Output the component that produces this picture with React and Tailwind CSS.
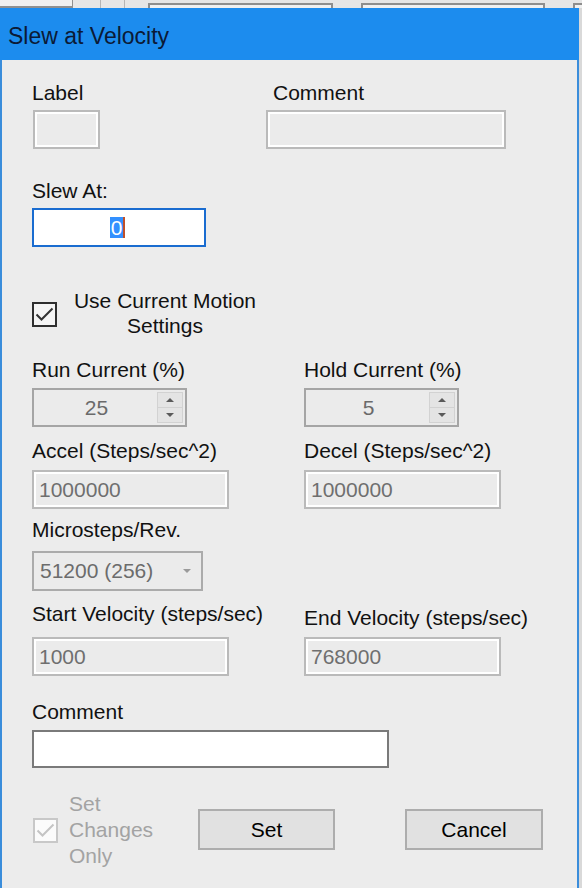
import React from "react";

const font = { fontFamily: '"Liberation Sans", Arial, sans-serif' };

function Label({ children, className = "" }) {
  return <div className={`text-[21px] leading-[24px] text-[#111] whitespace-nowrap ${className}`}>{children}</div>;
}

function GrayBox({ value, className = "" }) {
  return (
    <div
      className={`h-[39px] border-2 border-[#bababa] bg-[#ebebeb] shadow-[inset_0_0_0_2px_#ffffff] flex items-center pl-[5px] text-[21px] text-[#6f6f6f] ${className}`}
    >
      {value}
    </div>
  );
}

function Spinner({ value }) {
  return (
    <div className="w-[155px] h-[39px] border-2 border-[#a5a5a5] bg-[#ebebeb] flex items-stretch">
      <div className="flex-1 flex items-center justify-center text-[21px] text-[#6a6a6a] pl-[2px]">{value}</div>
      <div className="w-[26px] my-[2px] mr-[2px] flex flex-col">
        <div className="flex-1 bg-[#e4e4e4] border border-[#d2d2d2] flex items-center justify-center">
          <div className="w-0 h-0 border-x-[4px] border-x-transparent border-b-[4px] border-b-[#5a5a5a]" />
        </div>
        <div className="flex-1 bg-[#e4e4e4] border border-[#d2d2d2] border-t-0 flex items-center justify-center">
          <div className="w-0 h-0 border-x-[4px] border-x-transparent border-t-[4px] border-t-[#5a5a5a]" />
        </div>
      </div>
    </div>
  );
}

function Check({ disabled }) {
  const c = disabled ? "#c4c4c4" : "#333333";
  return (
    <div
      className={`w-[25px] h-[25px] border-2 flex items-center justify-center ${
        disabled ? "border-[#c8c8c8] bg-[#fbfbfb]" : "border-[#2f2f2f] bg-[#f5f5f5]"
      }`}
    >
      <svg width="21" height="21" viewBox="0 0 21 21">
        <polyline points="2.5,10.5 7.5,15.5 18.5,4.5" fill="none" stroke={c} strokeWidth="2" />
      </svg>
    </div>
  );
}

export default function App() {
  return (
    <div className="w-[582px] h-[888px] bg-[#d9d9d9] flex flex-col overflow-hidden" style={font}>
      {/* window behind the dialog */}
      <div className="h-[8px] shrink-0 flex bg-[#e6e6e6]">
        <div className="w-[73px] border-b-2 border-r border-[#909090] bg-[#f0f0f0]" />
        <div className="w-[28px] border-r border-[#b5b5b5]" />
        <div className="w-[24px] border-r border-[#b5b5b5]" />
        <div className="w-[23px]" />
        <div className="w-[185px] mt-[3px] border-t-2 border-x-2 border-[#8e8e8e] bg-[#f0f0f0]" />
        <div className="w-[28px]" />
        <div className="w-[184px] mt-[3px] border-t-2 border-x-2 border-[#8e8e8e] bg-[#f0f0f0]" />
        <div className="w-[28px]" />
        <div className="flex-1 mt-[3px] border-t-2 border-l-2 border-[#8e8e8e] bg-[#f0f0f0]" />
      </div>

      <div className="w-[579px] flex-1 flex flex-col">
        <div className="h-[52px] shrink-0 bg-[#1c8cee] pl-[8px] pt-[15px]">
          <div className="text-[23px] leading-[26px] text-[#0b1a36]">Slew at Velocity</div>
        </div>

        <div className="flex-1 bg-[#ececec] border-x-2 border-[#3a8ddb] pl-[30px]">
          {/* Label / Comment */}
          <div className="flex mt-[21px]">
            <div className="w-[234px]">
              <Label>Label</Label>
              <GrayBox className="mt-[5px] w-[67px] ml-[1px]" />
            </div>
            <div>
              <Label className="pl-[7px]">Comment</Label>
              <GrayBox className="mt-[5px] w-[240px]" />
            </div>
          </div>

          {/* Slew At */}
          <div className="mt-[30px]">
            <Label>Slew At:</Label>
            <div className="mt-[5px] w-[174px] h-[39px] border-2 border-[#1a6cd0] bg-white flex items-center justify-center">
              <span className="inline-block bg-[#3390ff] text-white text-[21px] leading-[21px] px-[1px] mr-[3px] border-r-2 border-[#c0502a]">
                0
              </span>
            </div>
          </div>

          {/* Use current motion settings */}
          <div className="mt-[41px] flex items-start">
            <div className="mt-[14px]">
              <Check />
            </div>
            <div className="ml-[16px] w-[184px] text-center text-[21px] leading-[25px] text-[#111] whitespace-nowrap">
              Use Current Motion
              <br />
              Settings
            </div>
          </div>

          {/* Run / Hold current */}
          <div className="mt-[20px] flex">
            <div className="w-[272px]">
              <Label>Run Current (%)</Label>
              <div className="mt-[6px]">
                <Spinner value="25" />
              </div>
            </div>
            <div>
              <Label>Hold Current (%)</Label>
              <div className="mt-[6px]">
                <Spinner value="5" />
              </div>
            </div>
          </div>

          {/* Accel / Decel */}
          <div className="mt-[12px] flex">
            <div className="w-[272px]">
              <Label>Accel (Steps/sec^2)</Label>
              <GrayBox value="1000000" className="mt-[7px] w-[197px]" />
            </div>
            <div>
              <Label>Decel (Steps/sec^2)</Label>
              <GrayBox value="1000000" className="mt-[7px] w-[197px]" />
            </div>
          </div>

          {/* Microsteps */}
          <div className="mt-[9px]">
            <Label>Microsteps/Rev.</Label>
            <div className="mt-[9px] w-[171px] h-[40px] border-2 border-[#ababab] bg-[#ebebeb] flex items-center pl-[6px] pr-[10px]">
              <span className="flex-1 text-[21px] text-[#6c6c6c]">51200 (256)</span>
              <div className="w-0 h-0 border-x-[4px] border-x-transparent border-t-[4px] border-t-[#9a9a9a]" />
            </div>
          </div>

          {/* Start / End velocity */}
          <div className="mt-[11px] flex">
            <div className="w-[272px]">
              <Label>Start Velocity (steps/sec)</Label>
              <GrayBox value="1000" className="mt-[11px] w-[197px]" />
            </div>
            <div className="pt-[4px]">
              <Label>End Velocity (steps/sec)</Label>
              <GrayBox value="768000" className="mt-[7px] w-[197px]" />
            </div>
          </div>

          {/* Comment */}
          <div className="mt-[24px]">
            <Label>Comment</Label>
            <div className="mt-[6px] w-[357px] h-[38px] border-2 border-[#7a7a7a] bg-white" />
          </div>

          {/* Bottom row */}
          <div className="mt-[23px] flex items-start">
            <div className="mt-[27px] ml-[1px]">
              <Check disabled />
            </div>
            <div className="ml-[11px] w-[129px] text-[21px] leading-[26px] text-[#a3a3a3]">
              Set
              <br />
              Changes
              <br />
              Only
            </div>
            <button className="mt-[18px] w-[137px] h-[41px] border-2 border-[#adadad] bg-[#e1e1e1] text-[21px] text-black">
              Set
            </button>
            <button className="mt-[18px] ml-[70px] w-[138px] h-[41px] border-2 border-[#adadad] bg-[#e1e1e1] text-[21px] text-black">
              Cancel
            </button>
          </div>
        </div>
      </div>
    </div>
  );
}
